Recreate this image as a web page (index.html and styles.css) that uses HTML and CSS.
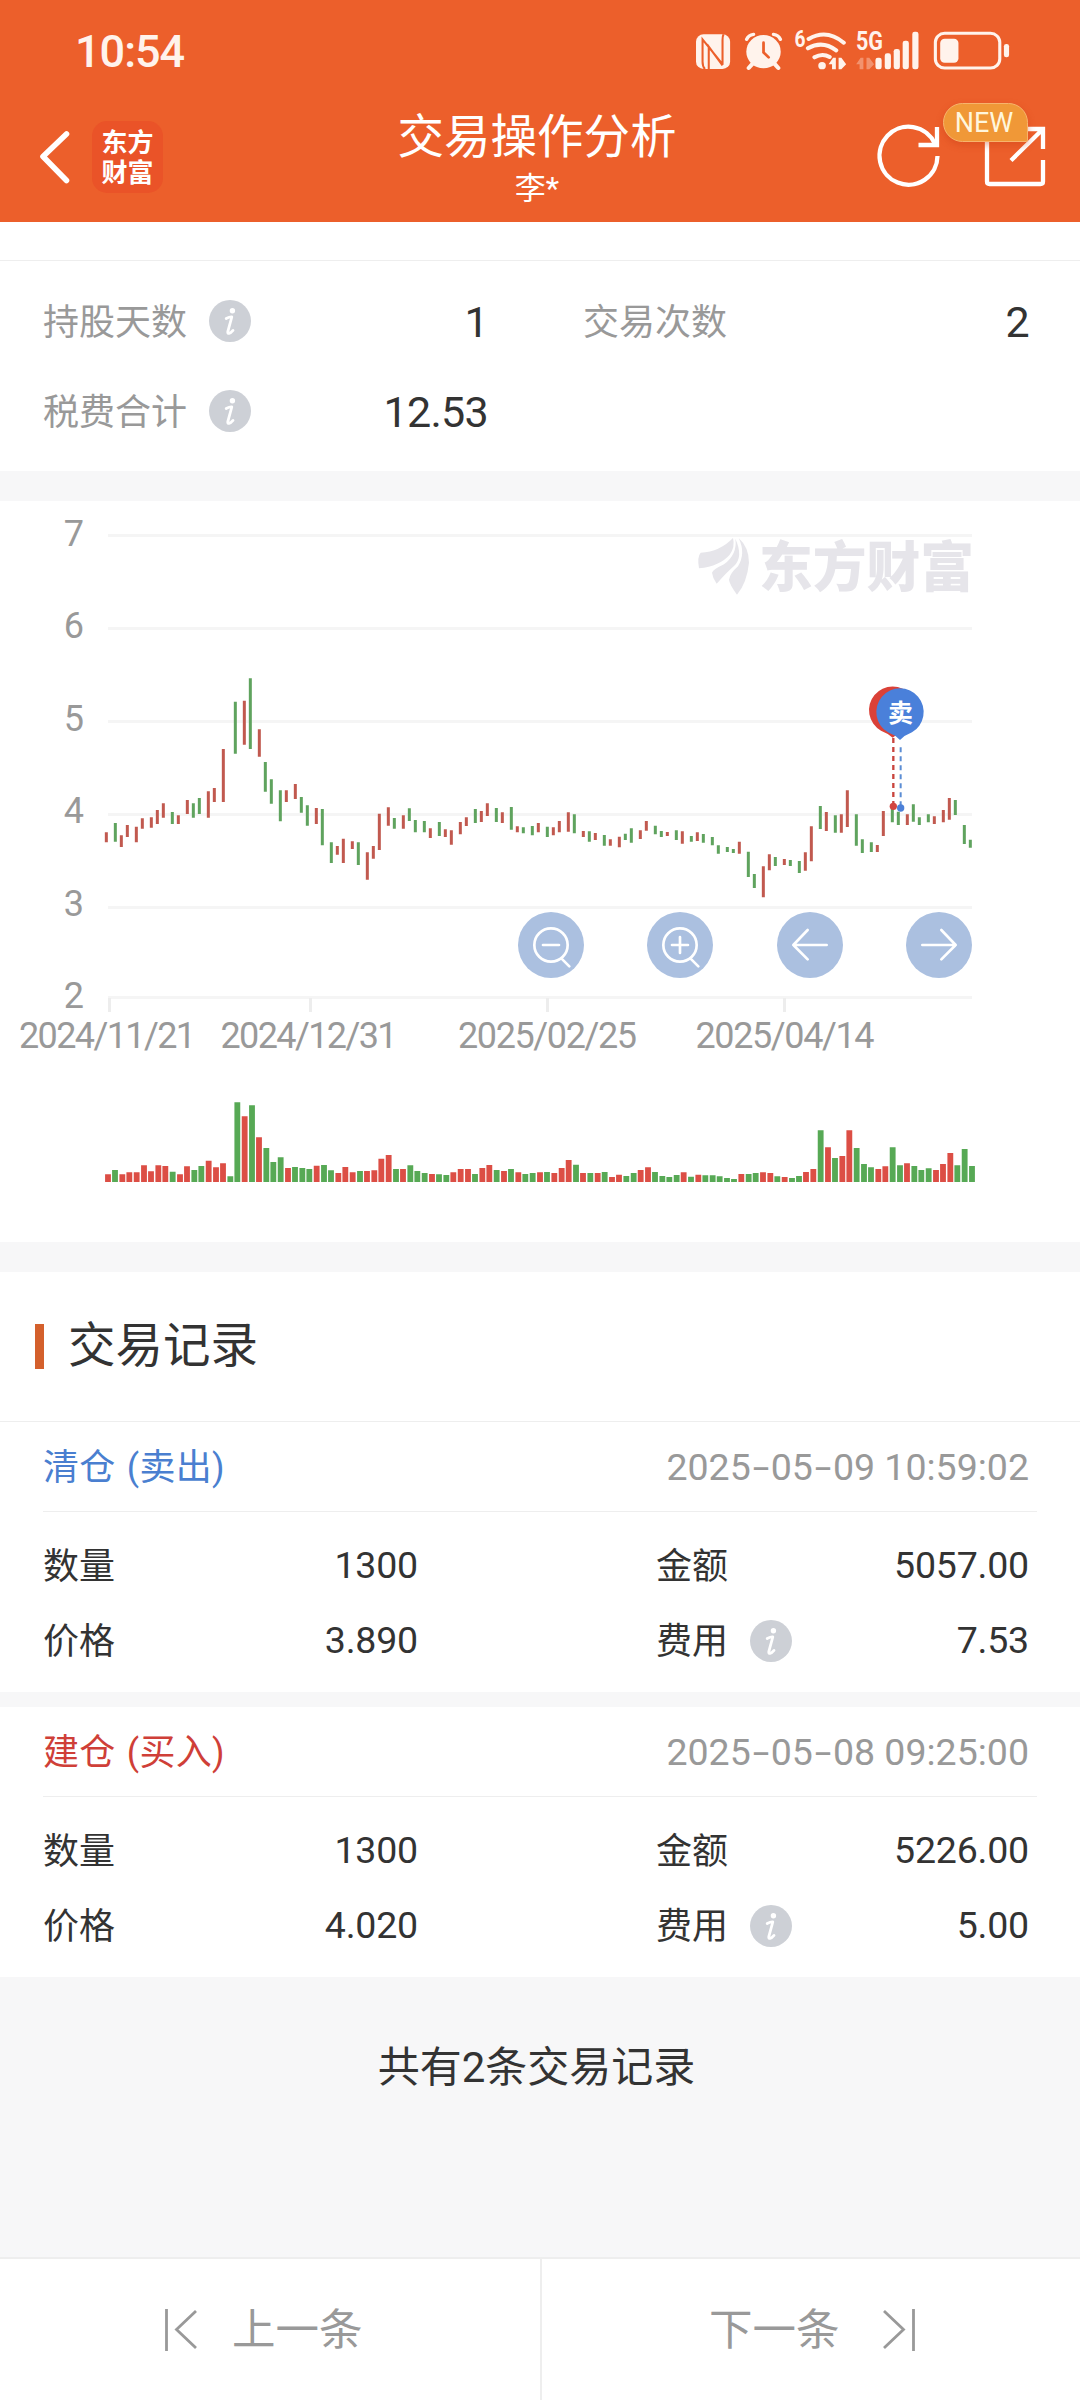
FILE: index.html
```html
<!DOCTYPE html>
<html lang="zh-CN">
<head>
<meta charset="utf-8">
<title>交易操作分析</title>
<link rel="stylesheet" href="styles.css">
</head>
<body>
<svg class="defs" width="0" height="0" aria-hidden="true">
  <symbol id="info" viewBox="0 0 42 42">
    <circle cx="21" cy="21" r="21" fill="#cdd0d6"/>
    <circle cx="23.400" cy="10.800" r="2.700" fill="#fff"/>
    <path d="M17.200 18.600C19.500 17.400 21.500 16.800 22.800 17L18.800 31.600C18.400 34.300 21 34 24 30.400" fill="none" stroke="#fff" stroke-width="2.800" stroke-linecap="round" stroke-linejoin="round"/>
  </symbol>
</svg>
<header class="header">
  <div class="status">
    <span class="time">10:54</span>
    <svg class="status-icons" viewBox="690 26 330 48" width="330" height="48">
      <g transform="translate(540) scale(.3444 .3333)" fill="#fff3ec">
        <rect x="453" y="103" width="99" height="104" rx="22"/>
        <path d="M479 207Q472 200 472 185V118L528 190M533 103Q530 108 530 120V194M490 207V140L530 196" fill="none" stroke="#ec5f2b" stroke-width="6"/>
        <circle cx="649" cy="155" r="50"/>
        <path d="M600 118Q605 105 620 103M698 118Q693 105 678 103" fill="none" stroke="#fff3ec" stroke-width="10" stroke-linecap="round"/>
        <path d="M618 190L606 204M680 190L692 204" stroke="#fff3ec" stroke-width="12" stroke-linecap="round"/>
        <path d="M649 128V157L664 172" fill="none" stroke="#ec5f2b" stroke-width="8" stroke-linecap="round"/>
        <path d="M780 117Q832 85 882 128M778 145Q820 120 860 151M797 172Q820 158 841 171" fill="none" stroke="#fff3ec" stroke-width="12" stroke-linecap="round"/>
        <circle cx="819" cy="197" r="11"/>
        <path d="M838 193L851 173H859V208H848V193ZM867 173H875L889 193L875 208H867Z"/>
        <path d="M918 193L931 173H939V208H928V193ZM948 173H956L970 193L956 208H948Z" opacity=".35"/>
        <rect x="974" y="173" width="18" height="35" rx="7"/><rect x="1001" y="160" width="18" height="48" rx="7"/><rect x="1027" y="147" width="18" height="61" rx="7"/><rect x="1053" y="122" width="18" height="86" rx="7"/><rect x="1081" y="95" width="18" height="113" rx="7"/>
        <rect x="1148" y="100" width="187" height="104" rx="27" fill="none" stroke="#fff3ec" stroke-width="9"/>
        <rect x="1162" y="116" width="53" height="72" rx="13"/><rect x="1347" y="132" width="15" height="40" rx="7"/>
      </g>
      <text class="tiny" x="794.5" y="46.5" font-size="23" textLength="11" lengthAdjust="spacingAndGlyphs">6</text>
      <text class="tiny" x="856" y="50" font-size="25" textLength="27" lengthAdjust="spacingAndGlyphs">5G</text>
    </svg>
  </div>
  <div class="nav">
    <div class="nav-left">
      <svg class="back" viewBox="38 128 34 58" width="34" height="58"><path d="M66.5 134L43 156.5L66.5 180.500" fill="none" stroke="#fff" stroke-width="5.600" stroke-linecap="round" stroke-linejoin="round"/></svg>
      <div class="brand">东方<br>财富</div>
    </div>
    <div class="nav-title"><h1>交易操作分析</h1><p>李*</p></div>
    <div class="nav-right">
      <svg viewBox="870 98 180 100" width="180" height="100">
        <g fill="none" stroke="#fff" stroke-width="4.300">
          <path d="M934.800 143.500A29 29 0 1 0 937.500 156"/>
          <path d="M937 127V145H918.500"/>
          <path d="M987 140V181.500Q987 184 989.500 184H1040.500Q1043 184 1043 181.500V160M1026 129H1043V149M1011 160.500L1042 130"/>
        </g>
      </svg>
      <span class="badge">NEW</span>
    </div>
  </div>
</header>
<main>
  <section class="stats">
    <div class="cell"><span class="label">持股天数</span><svg class="info"><use href="#info"/></svg><span class="num">1</span></div>
    <div class="cell"><span class="label">交易次数</span><span class="num">2</span></div>
    <div class="cell"><span class="label">税费合计</span><svg class="info"><use href="#info"/></svg><span class="num">12.53</span></div>
  </section>
  <section class="chart">
    <svg viewBox="0 501 1080 741" width="1080" height="741">
      <path d="M108 535.500H972M108 628.500H972M108 721.500H972M108 814.500H972M108 907.500H972M108 997.500H972" stroke="#f5f5f5" stroke-width="3"/>
      <path d="M109.500 998V1012M310.500 998V1012M547.500 998V1012M784.500 998V1012" stroke="#ededed" stroke-width="3"/>
      <g class="axis" text-anchor="end">
        <text x="84" y="546">7</text><text x="84" y="638">6</text><text x="84" y="731">5</text><text x="84" y="823">4</text><text x="84" y="916">3</text><text x="84" y="1008">2</text>
      </g>
      <g class="axis">
        <text x="19" y="1048" textLength="177">2024/11/21</text><text x="220.5" y="1048" textLength="177">2024/12/31</text><text x="458" y="1048" textLength="179">2025/02/25</text><text x="695.5" y="1048" textLength="179">2025/04/14</text>
      </g>
      <g transform="translate(500 510) scale(.33333)" fill="#e6e5ea">
        <path d="M699 84Q660 125 602 128Q591 140 597 175Q660 168 689 134Q706 111 699 84Z"/>
        <path d="M706 86Q713 132 672 163Q640 178 636 188Q638 205 650 221Q680 187 702 168Q731 140 706 86Z"/>
        <path d="M716 84Q738 130 714 169Q690 190 687 209Q688 222 711 254Q741 218 747 158Q747 112 716 84Z"/>
      </g>
      <text class="watermark" x="759" y="586.5" textLength="215" lengthAdjust="spacingAndGlyphs">东方财富</text>
      <g fill="none" stroke-width="9">
        <g transform="translate(80 640) scale(.33333)">
          <path stroke="#c1594f" d="M79 577V607M124 586V621M142 555V591M169 560V607M187 535V566M214 532V563M232 510V552M250 490V533M295 526V552M322 480V522M385 454V533M403 444V486M430 327V486M493 182V314M538 268V350M619 451V486M646 432V477M709 504V552M772 618V644M790 596V669M817 604V627M862 637V719M880 618V656M898 521V630M925 502V557"/>
          <path stroke="#5fa35e" d="M106 549V605M277 516V552M340 490V533M358 474V522M466 185V341M511 115V327M556 366V455M574 418V491M601 451V544M664 471V518M682 496V557M727 507V616M754 607V669M835 607V675"/>
        </g>
        <g transform="translate(380 740) scale(.33333)">
          <path stroke="#c1594f" d="M70 226V266M151 265V294M196 268V291M214 271V314M241 246V283M259 232V258M304 213V246M322 190V228M367 217V249M412 259V277M475 249V277M520 262V286M538 243V277M565 217V275M610 273V291M646 279V300M691 298V317M718 290V322M781 271V297M799 243V272M862 276V288M907 274V311"/>
          <path stroke="#5fa35e" d="M43 234V266M88 205V243M106 240V277M133 243V277M178 246V288M286 207V249M349 204V246M394 201V269M430 262V280M457 258V286M502 260V291M583 223V280M628 274V305M673 285V317M736 281V300M754 265V308M826 257V283M844 273V291M889 271V300"/>
        </g>
        <g transform="translate(680 660) scale(.33333)">
          <path stroke="#c1594f" d="M52 517V543M178 545V581M250 619V712M268 583V631M313 597V615M376 577V632M394 499V604M439 456V513M484 463V518M502 391V501M592 555V576M610 453V528M682 463V495M763 469V492M790 450V487M808 414V479"/>
          <path stroke="#5fa35e" d="M34 528V545M70 522V548M97 531V556M115 556V581M142 561V576M160 567V579M205 575V651M223 642V684M286 591V618M331 600V618M358 603V639M421 438V507M466 466V518M529 463V557M547 538V579M574 547V576M637 445V487M655 455V495M700 433V485M718 472V495M745 463V487M826 420V465M853 495V552M871 539V563"/>
        </g>
      </g>
      <g fill="none" stroke-width="17.500">
        <g transform="translate(90 1080) scale(.33333)">
          <path stroke="#dc4e45" d="M54 306V283M97 306V283M118 306V277M140 306V277M162 306V256M183 306V274M205 306V256M226 306V258M270 306V283M291 306V259M356 306V242M378 306V262M399 306V250M464 306V109M507 306V172M594 306V264M680 306V257M745 306V279M766 306V261M788 306V277M831 306V273M853 306V271M874 306V236M896 306V225M939 306V267M1026 306V282M1090 306V277M1112 306V267M1134 306V267M1177 306V264M1198 306V255M1242 306V273M1285 306V277"/>
          <path stroke="#57a955" d="M75 306V270M248 306V275M313 306V270M334 306V258M421 306V289M442 306V67M486 306V76M529 306V204M550 306V246M572 306V232M615 306V261M637 306V264M658 306V267M702 306V255M723 306V271M810 306V273M918 306V267M961 306V256M982 306V273M1004 306V279M1047 306V283M1069 306V285M1155 306V282M1220 306V270M1263 306V267M1306 306V282M1328 306V279"/>
        </g>
        <g transform="translate(530 1080) scale(.33333)">
          <path stroke="#dc4e45" d="M30 306V277M73 306V279M95 306V264M116 306V240M159 306V279M203 306V279M246 306V291M267 306V284M332 306V270M354 306V262M461 306V277M505 306V284M634 306V282M699 306V277M721 306V279M764 306V291M828 306V276M850 306V267M894 306V202M937 306V228M958 306V151M1045 306V267M1066 306V259M1131 306V250M1218 306V270M1239 306V252M1261 306V219"/>
          <path stroke="#57a955" d="M51 306V276M138 306V254M181 306V279M224 306V276M289 306V288M311 306V279M375 306V276M397 306V288M418 306V291M440 306V285M483 306V290M526 306V286M548 306V286M569 306V289M591 306V294M612 306V297M656 306V282M677 306V279M742 306V289M786 306V294M807 306V288M872 306V151M915 306V234M980 306V204M1002 306V252M1023 306V262M1088 306V202M1110 306V256M1153 306V258M1174 306V270M1196 306V265M1282 306V256M1304 306V207M1326 306V258"/>
        </g>
      </g>
      <g transform="translate(500 510) scale(.33333)">
        <path d="M1180 684V880" stroke="#c9443d" stroke-width="7" stroke-dasharray="15 12"/>
        <path d="M1202 712V885" stroke="#5b8dd4" stroke-width="6" stroke-dasharray="15 12"/>
        <circle cx="1180" cy="889" r="11" fill="#d24540"/><circle cx="1202" cy="894" r="11" fill="#4c80d8"/>
        <path d="M1178 683Q1164 670 1143 662A71 71 0 1 1 1213 662Q1192 670 1178 683Z" fill="#da4138"/>
        <path d="M1200 690Q1185 675 1164 667A71 71 0 1 1 1236 667Q1215 675 1200 690Z" fill="#4a80da"/>
      </g>
      <text class="sell" x="900.5" y="721.5" text-anchor="middle">卖</text>
      <g transform="translate(500 510) scale(.33333)" fill="none" stroke="#fff" stroke-width="8" stroke-linecap="round" stroke-linejoin="round">
        <g fill="#abc0e0" stroke="none"><circle cx="153" cy="1305" r="99"/><circle cx="540" cy="1305" r="99"/><circle cx="930" cy="1305" r="99"/><circle cx="1317" cy="1305" r="99"/></g>
        <circle cx="153" cy="1305" r="50"/><path d="M129 1305H177M187 1348L208 1369"/>
        <circle cx="540" cy="1305" r="50"/><path d="M516 1305H564M540 1281V1329M574 1348L595 1369"/>
        <path d="M980 1305H880M923 1260L880 1305L923 1348"/>
        <path d="M1267 1305H1367M1324 1260L1367 1305L1324 1348"/>
      </g>
    </svg>
  </section>
  <section class="records">
    <h2>交易记录</h2>
    <article class="record">
      <div class="record-head"><span class="type sell-type">清仓 (卖出)</span><time>2025<i>-</i>05<i>-</i>09 10:59:02</time></div>
      <div class="record-body">
        <div class="cell"><span class="key">数量</span><span class="num">1300</span></div>
        <div class="cell"><span class="key">金额</span><span class="num">5057.00</span></div>
        <div class="cell"><span class="key">价格</span><span class="num">3.890</span></div>
        <div class="cell"><span class="key">费用</span><svg class="info"><use href="#info"/></svg><span class="num">7.53</span></div>
      </div>
    </article>
    <article class="record">
      <div class="record-head"><span class="type buy-type">建仓 (买入)</span><time>2025<i>-</i>05<i>-</i>08 09:25:00</time></div>
      <div class="record-body">
        <div class="cell"><span class="key">数量</span><span class="num">1300</span></div>
        <div class="cell"><span class="key">金额</span><span class="num">5226.00</span></div>
        <div class="cell"><span class="key">价格</span><span class="num">4.020</span></div>
        <div class="cell"><span class="key">费用</span><svg class="info"><use href="#info"/></svg><span class="num">5.00</span></div>
      </div>
    </article>
  </section>
  <p class="total">共有2条交易记录</p>
</main>
<footer class="pager">
  <div class="prev"><svg viewBox="0 0 34 44" width="34" height="44"><path d="M2.500 1V43M32 3L12.500 21.500L32 40" fill="none" stroke="#999" stroke-width="2.800"/></svg><span>上一条</span></div>
  <div class="next"><span>下一条</span><svg viewBox="0 0 34 44" width="34" height="44"><path d="M31.500 1V43M2 3L21.500 21.500L2 40" fill="none" stroke="#999" stroke-width="2.800"/></svg></div>
</footer>
</body>
</html>
```
FILE: styles.css
```css
* { box-sizing: border-box; margin: 0; padding: 0; }
body {
  width: 1080px; height: 2400px; overflow: hidden;
  display: flex; flex-direction: column;
  background: #f7f7f8; color: #333;
  font-family: Roboto, "Noto Sans CJK SC", sans-serif; font-size: 36px; line-height: 1;
}
.defs { position: absolute; }
.header { height: 222px; background: #ec5f2b; color: #fff; flex: none; }
.status { height: 86px; padding: 26px 60px 0 75px; display: flex; justify-content: space-between; }
.time { font-size: 45px; font-weight: 500; line-height: 52px; letter-spacing: -1px; color: #fff3ec; }
.tiny { fill: #fff3ec; font-weight: 700; }
.nav { height: 136px; display: grid; grid-template-columns: 330px 352px 330px; padding: 0 30px 0 38px; }
.nav-left { display: flex; align-items: center; gap: 20px; padding-top: 5px; }
.brand {
  width: 71px; height: 72px; border-radius: 15px; background: #ea5328;
  text-align: center; font-size: 26px; font-weight: 700; line-height: 30px; padding-top: 7px;
}
.nav-title { text-align: center; padding: 24px 14px 0 0; }
.nav-title h1 { font-size: 46.5px; font-weight: 400; line-height: 54px; white-space: nowrap; }
.nav-title p { font-size: 31px; line-height: 40px; margin-top: 5px; }
.nav-right { position: relative; display: flex; justify-content: flex-end; padding-top: 12px; }
.badge {
  position: absolute; right: 22px; top: 17px; width: 85px; height: 39px;
  border: 1.5px solid #f7b46c; border-radius: 20px 20px 2px 20px; background: #f09837;
  box-shadow: 0 3px 7px rgba(200, 60, 20, .4);
  color: #fff6dc; font-size: 27px; line-height: 38px; text-align: center; padding-right: 3px;
}
main { flex: 1; }
.stats {
  display: grid; grid-template-columns: 445px 446px; column-gap: 95px; grid-auto-rows: 90px;
  height: 249px; padding: 16px 0 0 43px; background: #fff;
  border-top: 38px solid #fff; background-clip: padding-box; box-shadow: inset 0 1px #eee;
}
.cell { display: flex; align-items: center; }
.label, .key, .type { padding-top: 3px; }
.label { color: #999; }
.info { width: 42px; height: 42px; margin-left: 22px; }
.num { margin-left: auto; letter-spacing: -.2px; }
.stats .num { font-size: 43px; letter-spacing: -.7px; padding-top: 2px; }
.chart { height: 741px; margin: 30px 0; background: #fff; }
.chart svg { display: block; }
.axis { fill: #999; font-size: 36px; }
.watermark { fill: #e6e5ea; font: 900 54px "Noto Sans CJK SC", sans-serif; }
.sell { fill: #fff; font: 700 25px "Noto Sans CJK SC", sans-serif; }
h2 {
  height: 150px; display: flex; align-items: center; gap: 24px; padding: 0 0 0 35px;
  background: #fff; border-bottom: 1px solid #eee; font-size: 47.5px; font-weight: 400; line-height: 45px;
}
h2::before { content: ""; width: 9px; height: 45px; margin-top: -1px; background: #d4602c; }
.record { height: 270px; background: #fff; }
.record + .record { margin-top: 15px; }
.record-head {
  height: 90px; margin: 0 43px; padding-right: 8px; border-bottom: 1px solid #eee;
  display: flex; align-items: center; justify-content: space-between;
}
.type { word-spacing: 2px; letter-spacing: .3px; }
.sell-type { color: #4a7fd0; }
.buy-type { color: #cf3f38; }
time { color: #999; font-size: 37.5px; padding-top: 2px; }
time i { display: inline-block; width: 20px; text-align: center; font-style: normal; transform: scaleX(1.6); }
.record-body {
  display: grid; grid-template-columns: 375px 373px; column-gap: 238px; grid-auto-rows: 75px;
  padding: 16px 0 0 43px;
}
.record .num { font-size: 37.5px; }
.total { padding-top: 65px; padding-right: 7px; text-align: center; font-size: 42px; line-height: 52px; }
.pager {
  flex: none; height: 143px; display: grid; grid-template-columns: 542px 538px;
  border-top: 2px solid #eee; background: #fff; color: #999; font-size: 43.5px;
}
.pager > div { display: flex; align-items: center; }
.pager span { padding-top: 2px; }
.prev { padding-left: 164px; gap: 34px; border-right: 2px solid #eee; }
.next { padding-left: 167px; gap: 42px; }
```
